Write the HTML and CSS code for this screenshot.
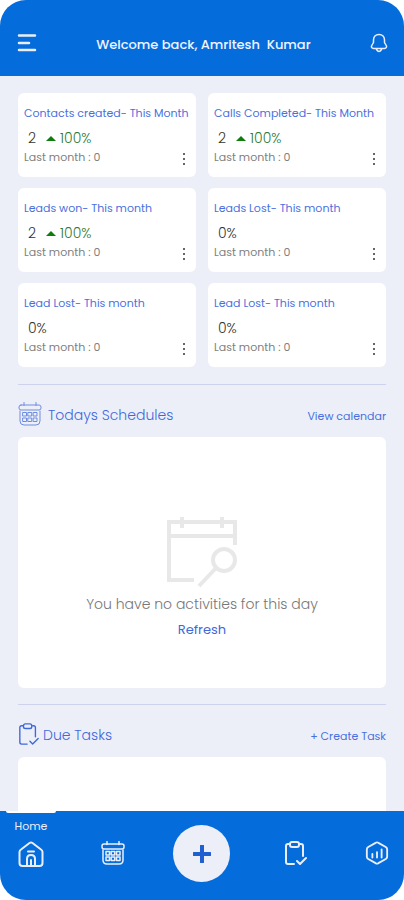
FILE: index.html
```html
<!DOCTYPE html>
<html lang="en">
<head>
<meta charset="utf-8">
<meta name="viewport" content="width=device-width, initial-scale=1">
<title>Dashboard</title>
<link rel="stylesheet" href="styles.css">
</head>
<body>
<svg class="sprite" aria-hidden="true">
  <symbol id="calendar" viewBox="0 0 24 24">
    <rect x="1" y="3" width="22" height="5" rx="2"/>
    <path d="M2 9v10q0 4 4 4h12q4 0 4-4V9M6 0.5v3M18 0.5v3"/>
    <path d="M5 10.500h3.500v3.500h-3.500zM10.200 10.500h3.500v3.500h-3.500zM15.500 10.500h3.500v3.500h-3.500zM5 16h3.500v3.500h-3.500zM10.200 16h3.500v3.500h-3.500zM15.500 16h3.500v3.500h-3.500z"/>
  </symbol>
  <symbol id="clipboard" viewBox="0 0 24 24">
    <path d="M6 3H4Q2 3 2 5v16q0 2 2 2h6M16 3h1q2 0 2 2v10"/>
    <rect x="6" y="1" width="9" height="5" rx="2"/>
    <path d="M13 20l3 3 6-6"/>
  </symbol>
  <symbol id="dots" viewBox="0 0 4 14">
    <circle cx="2" cy="2" r="1"/><circle cx="2" cy="7" r="1"/><circle cx="2" cy="12" r="1"/>
  </symbol>
</svg>
<div class="app">
  <header class="topbar">
    <button class="icon-button" aria-label="Menu">
      <svg class="menu-icon" viewBox="0 0 20 18"><path d="M2 1.500h16M2 9h10M2 16h16"/></svg>
    </button>
    <h1 class="welcome">Welcome back, Amritesh&nbsp; Kumar</h1>
    <button class="icon-button" aria-label="Notifications">
      <svg class="bell-icon" viewBox="0 0 18 20"><path d="M9 1.500C5.500 1.500 3.500 4 3.500 7v2.500L1.500 13q-.5 2 2 2.500h11q2.500-.5 2-2.500l-2-3.500V7C14.500 4 12.500 1.500 9 1.500zM6.500 16.500q2.500 4 5 0"/></svg>
    </button>
  </header>

  <main class="content">
    <section class="stats">
      <article class="stat">
        <h2 class="stat-title">Contacts created- This Month</h2>
        <p class="stat-value">2 <span class="rise"></span><span class="percent">100%</span></p>
        <p class="stat-last">Last month : 0</p>
        <button class="more" aria-label="More"><svg><use href="#dots"/></svg></button>
      </article>
      <article class="stat">
        <h2 class="stat-title">Calls Completed- This Month</h2>
        <p class="stat-value">2 <span class="rise"></span><span class="percent">100%</span></p>
        <p class="stat-last">Last month : 0</p>
        <button class="more" aria-label="More"><svg><use href="#dots"/></svg></button>
      </article>
      <article class="stat">
        <h2 class="stat-title">Leads won- This month</h2>
        <p class="stat-value">2 <span class="rise"></span><span class="percent">100%</span></p>
        <p class="stat-last">Last month : 0</p>
        <button class="more" aria-label="More"><svg><use href="#dots"/></svg></button>
      </article>
      <article class="stat">
        <h2 class="stat-title">Leads Lost- This month</h2>
        <p class="stat-value">0%</p>
        <p class="stat-last">Last month : 0</p>
        <button class="more" aria-label="More"><svg><use href="#dots"/></svg></button>
      </article>
      <article class="stat">
        <h2 class="stat-title">Lead Lost- This month</h2>
        <p class="stat-value">0%</p>
        <p class="stat-last">Last month : 0</p>
        <button class="more" aria-label="More"><svg><use href="#dots"/></svg></button>
      </article>
      <article class="stat">
        <h2 class="stat-title">Lead Lost- This month</h2>
        <p class="stat-value">0%</p>
        <p class="stat-last">Last month : 0</p>
        <button class="more" aria-label="More"><svg><use href="#dots"/></svg></button>
      </article>
    </section>

    <section class="panel">
      <div class="panel-head">
        <svg class="panel-icon calendar-icon"><use href="#calendar"/></svg>
        <h2 class="panel-title">Todays Schedules</h2>
        <a class="panel-link" href="#">View calendar</a>
      </div>
      <div class="card empty">
        <svg class="empty-icon" viewBox="0 0 72 72">
          <path d="M28 64H3V6h66v23M3 20h66" stroke-width="4"/>
          <path d="M16 1v11M56 1v11" stroke-width="4"/>
          <circle cx="58" cy="44" r="11" stroke-width="4"/>
          <path d="M50 52L33 70" stroke-width="4"/>
        </svg>
        <p class="empty-text">You have no activities for this day</p>
        <button class="refresh">Refresh</button>
      </div>
    </section>

    <section class="panel">
      <div class="panel-head">
        <svg class="panel-icon"><use href="#clipboard"/></svg>
        <h2 class="panel-title due">Due Tasks</h2>
        <a class="panel-link" href="#">+ Create Task</a>
      </div>
      <div class="card tasks"></div>
    </section>
  </main>

  <nav class="tabs">
    <a class="tab active" href="#" aria-label="Home">
      <span class="tab-label">Home</span>
      <svg class="tab-icon" viewBox="0 0 26 26"><path d="M1.500 11q0-1.500 1.500-2.500l8.500-6.500q1.500-1 3 0l8.500 6.500q1.500 1 1.500 2.500v11q0 3-3 3h-17q-3 0-3-3zM9 25v-7q0-4 4-4t4 4v7M13 19v6M10 10.500h6"/></svg>
    </a>
    <a class="tab" href="#" aria-label="Calendar"><svg class="tab-icon fine"><use href="#calendar"/></svg></a>
    <button class="add" aria-label="Add"><svg viewBox="0 0 18 18"><path d="M9 1v16M1 9h16"/></svg></button>
    <a class="tab" href="#" aria-label="Tasks"><svg class="tab-icon"><use href="#clipboard"/></svg></a>
    <a class="tab" href="#" aria-label="Reports">
      <svg class="tab-icon" viewBox="0 0 26 26"><path d="M11.500 2q1.500-1 3 0l8 4.500q1.500 1 1.500 2.500v8q0 1.500-1.500 2.500l-8 4.500q-1.500 1-3 0l-8-4.500Q2 18.500 2 17V9q0-1.500 1.500-2.500zM8 14v4M13 12v6M18 9v9"/></svg>
    </a>
  </nav>
</div>
</body>
</html>
```
FILE: styles.css
```css
* { box-sizing: border-box; }

body {
  margin: 0;
  background: #fff;
  font-family: Poppins, Inter, "Open Sans", sans-serif;
  font-weight: 300;
}

h1, h2, p { margin: 0; font-weight: inherit; }
a { text-decoration: none; }

button {
  padding: 0;
  border: 0;
  background: none;
  font: inherit;
  cursor: pointer;
}

svg { display: block; fill: none; stroke-linecap: round; stroke-linejoin: round; }

.sprite { position: absolute; width: 0; height: 0; }

.app {
  display: flex;
  flex-direction: column;
  height: 100vh;
  border-radius: 26px;
  overflow: hidden;
  background: #eceff8;
}

.topbar {
  display: flex;
  align-items: center;
  justify-content: space-between;
  flex: none;
  height: 76px;
  padding: 9px 16px 0 17px;
  background: #056cdc;
}

.icon-button svg { stroke: #ebeef8; }
.menu-icon { width: 20px; height: 18px; stroke-width: 2.5; }
.bell-icon { width: 18px; height: 20px; stroke-width: 1.5; }

.welcome {
  padding-top: 4px;
  color: #f0f4ff;
  font-size: 13px;
  font-weight: 500;
  line-height: 20px;
}

.content {
  flex: 1;
  min-height: 0;
  padding: 17px 18px 0;
  overflow-y: auto;
  scrollbar-width: none;
}

.stats {
  display: grid;
  grid-template-columns: repeat(2, minmax(0, 1fr));
  gap: 11px 12px;
  padding-bottom: 17px;
}

.stat {
  position: relative;
  padding: 10px 0 12px 6px;
  border-radius: 6px;
  background: #fff;
  white-space: nowrap;
}

.stat-title { color: #4a70de; font-size: 11px; font-weight: 400; line-height: 20px; }

.stat-value {
  display: flex;
  align-items: center;
  margin-top: 4px;
  padding-left: 4px;
  color: #333;
  font-size: 14px;
  line-height: 22px;
}

.rise {
  margin: 0 4px 0 10px;
  border: 5px solid transparent;
  border-top: 0;
  border-bottom: 5px solid #107c10;
}

.percent { color: #2c7a35; }
.stat-last { color: #808080; font-size: 11px; font-weight: 400; line-height: 16px; }

.more { position: absolute; right: 10px; bottom: 11px; }
.more svg { width: 4px; height: 14px; fill: #333; }

.panel { border-top: 1px solid #cdd3ec; }

.panel-head {
  display: flex;
  align-items: center;
  height: 52px;
  padding-top: 6px;
}

.panel-icon { width: 22px; height: 24px; stroke: #3f68dc; stroke-width: 1.5; }
.calendar-icon { width: 24px; stroke: #6f8de0; stroke-width: 1; }

.panel-title {
  margin-left: 6px;
  padding-top: 2px;
  color: #3f68dc;
  font-size: 14px;
  line-height: 20px;
}

.due { margin-left: 3px; }

.panel-link {
  margin-left: auto;
  padding-top: 4px;
  color: #4a70de;
  font-size: 11px;
  font-weight: 400;
  line-height: 16px;
}

.card { border-radius: 6px; background: #fff; }

.empty {
  display: flex;
  flex-direction: column;
  align-items: center;
  margin-bottom: 16px;
  padding: 79px 0 46px;
}

.empty-icon { width: 72px; height: 72px; stroke: #e8e8e8; stroke-linecap: butt; stroke-linejoin: miter; }
.empty-text { margin-top: 4px; color: #777; font-size: 14px; line-height: 24px; }
.refresh { margin-top: 2px; color: #3f68dc; font-size: 13px; font-weight: 400; line-height: 24px; }

.tasks { height: 250px; }

.tabs {
  display: grid;
  grid-template-columns: 62fr 102fr 75fr 114fr 47fr;
  flex: none;
  height: 89px;
  padding-right: 4px;
  background: #056cdc;
}

.tab {
  display: flex;
  flex-direction: column;
  align-items: center;
  padding-top: 30px;
}

.active { padding-top: 0; }

.active::before {
  width: 50px;
  height: 2px;
  border-radius: 0 0 2px 2px;
  background: #fff;
  content: "";
}

.tab-label {
  margin: 5px 0 7px;
  color: #ebeef8;
  font-size: 11px;
  font-weight: 400;
  line-height: 16px;
}

.tab-icon { width: 24px; height: 24px; stroke: #ebeef8; stroke-width: 2; }
.active .tab-icon { width: 26px; height: 26px; }
.fine { stroke-width: 1.5; }

.add {
  display: grid;
  place-items: center;
  justify-self: center;
  width: 57px;
  height: 57px;
  margin-top: 14px;
  border-radius: 50%;
  background: #eceff8;
}

.add svg { width: 18px; height: 18px; stroke: #1f5fd0; stroke-width: 4; stroke-linecap: round; }
```
